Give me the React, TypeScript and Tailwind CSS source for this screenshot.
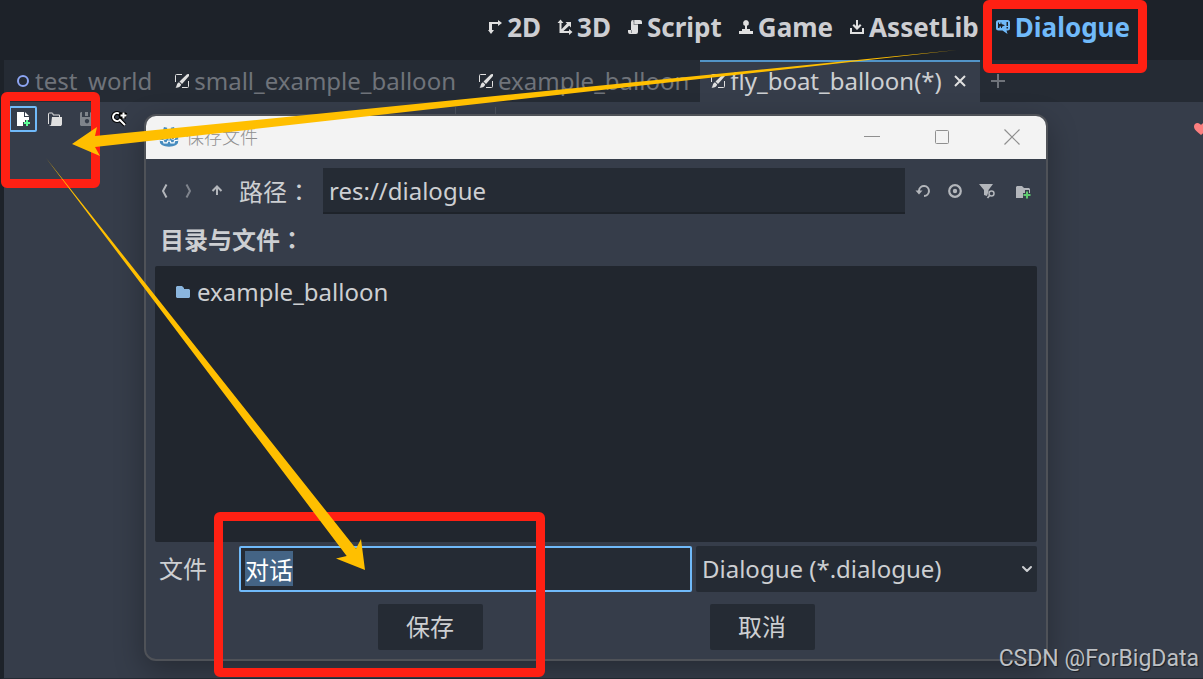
import { useEffect, useRef } from 'react'
import type { ReactNode } from 'react'
import { ChevronDown } from 'lucide-react'

type IconProps = { children: ReactNode; className?: string }

const Icon = ({ children, className = 'text-[#e0e0e0]' }: IconProps) => (
  <svg className={`w-4 h-4 shrink-0 ${className}`} viewBox="0 0 16 16" fill="currentColor" aria-hidden="true">
    {children}
  </svg>
)

const Icon2D = () => (
  <Icon>
    <path d="M2 3h9V1l4 3-4 3V5H5v6h2l-3 4-3-4h1V3z" />
  </Icon>
)

const Icon3D = () => (
  <Icon>
    <path d="M3.500 0.500L6.500 4H4.500v6.200L10 4.600 8.500 3H14v5.500l-1.800-1.700L6.500 12H12v-2l3.500 3-3.500 3v-2H2.500V4H0.500z" />
  </Icon>
)

const IconScript = () => (
  <Icon>
    <path d="M6 1a2 2 0 0 0-2 2v8H1v2a2 2 0 0 0 2 2h6a2 2 0 0 0 2-2V5h4V3a2 2 0 0 0-2-2z" />
    <path fill="#8d9094" d="M6 1h1.500v4H11v1H6.500V3H6zM4 11h1v3H4z" />
  </Icon>
)

const IconGame = () => (
  <Icon>
    <path d="M8 1a3 3 0 0 0-1 5.800V10H4v2H1v3h14v-3h-3v-2H9V6.800A3 3 0 0 0 8 1z" />
  </Icon>
)

const IconAssetLib = () => (
  <Icon>
    <path d="M7 1h2v6l2-2 1.500 1.500L8 11 3.500 6.500 5 5l2 2zM1 9h2v4h10V9h2v6H1z" />
  </Icon>
)

const IconDialogue = () => (
  <Icon className="text-[#70bafa]">
    <path d="M4 1h8.500A2.500 2.500 0 0 1 15 3.500V9a2.500 2.500 0 0 1-2.500 2.500h-1l1 3.500-5-3.500H3.500A2.500 2.500 0 0 1 1 9V3.500A2.500 2.500 0 0 1 3.500 1z" />
    <path
      d="M3 3.500h1v1.500h1.500V3.500h1V5l3.500 1.300-3 1.500V9H6V7.500H4.500V9H3zM11.500 3H13v4h-1.500zM11.500 8H13v1.500h-1.500z"
      fill="#1d2229"
    />
  </Icon>
)

const IconScene = () => (
  <Icon>
    <path d="M13 1.200L15 1v2L8 11 5.500 8.500zM5 9.200L7.200 11.500C6.500 14 4 15 1.500 14.700 3 13.500 2.500 10 5 9.200z" />
    <path fill="none" stroke="currentColor" d="M1.500 9V2.500a1 1 0 0 1 1-1H8M14.500 8v5.500a1 1 0 0 1-1 1H8" />
  </Icon>
)

const views = [
  { name: '2D', icon: <Icon2D /> },
  { name: '3D', icon: <Icon3D /> },
  { name: 'Script', icon: <IconScript /> },
  { name: 'Game', icon: <IconGame /> },
  { name: 'AssetLib', icon: <IconAssetLib /> },
  { name: 'Dialogue', icon: <IconDialogue />, active: true },
]

const MainNav = () => (
  <nav className="flex h-[60px] shrink-0 items-start justify-end gap-4 bg-[#1d2229] pt-[9px] pr-[73px]">
    {views.map((v) => (
      <button
        key={v.name}
        className={`flex items-center gap-1 text-[26px] leading-9 font-bold ${v.active ? 'text-[#70bafa]' : 'text-[#cdced2]'}`}
      >
        {v.icon}
        {v.name}
      </button>
    ))}
  </nav>
)

const SceneTabs = () => (
  <div className="flex h-[42px] shrink-0 bg-[#252b34] text-[24px] leading-8 text-[#6f737a]">
    <button className="flex items-center gap-[3px] px-3">
      <Icon className="text-[#8da5f3]">
        <circle cx="7" cy="8" r="5" fill="none" stroke="currentColor" strokeWidth="2" />
      </Icon>
      test_world
    </button>
    <button className="flex items-center gap-1 pr-3 pl-2.5">
      <IconScene />
      small_example_balloon
    </button>
    <button className="flex items-center gap-1 pr-[11px] pl-2.5">
      <IconScene />
      example_balloon
    </button>
    <div className="flex items-center border-t-2 border-[#5294c8] bg-[#363d4a] pr-3 pb-0.5 pl-2.5 text-[#cdcfd2]">
      <button className="flex items-center gap-1">
        <IconScene />
        fly_boat_balloon(*)
      </button>
      <button className="ml-2.5" aria-label="Close tab">
        <Icon>
          <path d="M3 3l10 10M13 3L3 13" stroke="currentColor" strokeWidth="2" />
        </Icon>
      </button>
    </div>
    <button className="px-2.5" aria-label="New tab">
      <Icon className="text-[#6f737a]">
        <path d="M7 1h2v6h6v2H9v6H7V9H1V7h6z" />
      </Icon>
    </button>
  </div>
)

const Toolbar = () => (
  <div className="flex items-center pt-1 pl-[5px]">
    <button className="rounded-xs border-2 border-[#70bafa] px-1 py-[3px]" aria-label="New">
      <Icon className="text-white">
        <path d="M2 1h7v5h5v3h-4v2H8v4H2zM10 1l4 4h-4z" />
        <path fill="#5fff97" d="M11 9h2v2h2v2h-2v2h-2v-2H9v-2h2z" />
      </Icon>
    </button>
    <button className="ml-2.5" aria-label="Open">
      <Icon>
        <path fill="none" stroke="currentColor" d="M1.500 13V3a1 1 0 0 1 1-1H5a1 1 0 0 1 1 1v1h6.500V6" />
        <path d="M5 6h10v7.500L14 15H2l2-1z" />
      </Icon>
    </button>
    <button className="ml-4" aria-label="Save">
      <Icon className="text-[#7f848c]">
        <path fillRule="evenodd" d="M2 1h1v5h8V1l4 3v10l-1 1H2l-1-1V2zM8 8a2.200 2.200 0 1 0 0.010 0zM6 1h3v4H6z" />
      </Icon>
    </button>
    <button className="ml-4" aria-label="Find">
      <Icon className="text-white">
        <g fill="none" stroke="#000" strokeWidth="4">
          <circle cx="6" cy="6" r="4" />
          <path d="M9 9l5 5M9 4h7M12.500 1v7" />
        </g>
        <g fill="none" stroke="currentColor" strokeWidth="2">
          <path d="M8 2.500A4 4 0 1 0 9.500 8M9 9l5 5M9.500 4.500h6M12.500 1.500v6" />
        </g>
      </Icon>
    </button>
    <div className="ml-[328px] h-6 w-px bg-[#4b515c]" />
    <div className="ml-[39px] h-6 w-px bg-[#4b515c]" />
  </div>
)

const GodotLogo = () => (
  <svg className="h-[22px] w-[22px]" viewBox="0 0 24 24" aria-hidden="true">
    <path
      fill="#478cbf"
      d="M6.500 1l3.500.8V4h4V1.800l3.500-.8 1 3.500 2 1.500 1.500 2v9c0 3.500-4 5.500-10 5.500S2 20.500 2 17V8l1.500-2 2-1.500z"
    />
    <path d="M2 15.500L6 16l.5 2.500H10l.5-2h3l.5 2h3.500L18 16l4-.5" fill="none" stroke="#fff" strokeWidth="1.300" />
    <circle cx="7.500" cy="12.500" r="2.600" fill="#fff" />
    <circle cx="16.500" cy="12.500" r="2.600" fill="#fff" />
    <circle cx="7.800" cy="12.500" r="1.500" fill="#414042" />
    <circle cx="16.200" cy="12.500" r="1.500" fill="#414042" />
    <path d="M11.300 12h1.400v3h-1.400z" fill="#fff" />
  </svg>
)

const TitleBar = () => (
  <header className="flex h-[43px] items-center bg-[#f3f3f3] pr-[26px] pb-0.5 pl-3 text-[#8f8f8f]">
    <GodotLogo />
    <h1 className="ml-1.5 flex-1 text-[18px] leading-6 font-light">保存文件</h1>
    <div className="flex gap-[54px]">
      <button aria-label="Minimize">
        <Icon className="text-[#8f8f8f]">
          <path d="M0 7h16v1H0z" />
        </Icon>
      </button>
      <button aria-label="Maximize">
        <Icon className="text-[#8f8f8f]">
          <rect x="1.500" y="1.500" width="13" height="13" rx="1" fill="none" stroke="currentColor" />
        </Icon>
      </button>
      <button aria-label="Close">
        <Icon className="text-[#8f8f8f]">
          <path d="M0.500 0.500l15 15M15.500 0.500l-15 15" stroke="currentColor" strokeWidth="1.200" />
        </Icon>
      </button>
    </div>
  </header>
)

const Colon = () => <span className="font-['Noto_Sans_CJK_TC',sans-serif]">：</span>

const PathRow = () => (
  <div className="flex items-center">
    <button className="ml-px" aria-label="Back">
      <Icon className="text-[#b3b6bb]">
        <path d="M10.500 1.500L7 8l3.500 6.500" fill="none" stroke="currentColor" strokeWidth="2" />
      </Icon>
    </button>
    <button className="ml-2" aria-label="Forward">
      <Icon className="text-[#7f848d]">
        <path d="M6.500 1.500L10 8l-3.500 6.500" fill="none" stroke="currentColor" strokeWidth="2" />
      </Icon>
    </button>
    <button className="ml-[13px]" aria-label="Up">
      <Icon className="text-[#b3b6bb]">
        <path d="M8 12V4M3.500 8L8 3.500 12.500 8" fill="none" stroke="currentColor" strokeWidth="2" />
      </Icon>
    </button>
    <label htmlFor="path" className="ml-3.5 w-[84px]">
      路径
      <Colon />
    </label>
    <input
      id="path"
      defaultValue="res://dialogue"
      className="h-[46px] min-w-0 flex-1 border-b-2 border-[#1e232a] bg-[#252b34] px-1.5 outline-none"
    />
    <div className="flex items-center pr-1.5 pl-2.5">
      <button aria-label="Refresh">
        <Icon className="text-[#b3b6bb]">
          <path d="M4 9V7.500a5 5 0 1 1 5 5.500" fill="none" stroke="currentColor" strokeWidth="2" />
          <path d="M0.500 7.500h7L4 11.500z" />
        </Icon>
      </button>
      <button className="ml-4" aria-label="Toggle hidden files">
        <Icon className="text-[#b3b6bb]">
          <circle cx="8" cy="8" r="5.800" fill="none" stroke="currentColor" strokeWidth="2.200" />
          <circle cx="8" cy="8" r="2.200" />
        </Icon>
      </button>
      <button className="ml-4" aria-label="Filter">
        <Icon className="text-[#b3b6bb]">
          <path d="M0 1h14L9.500 7v1.500L8 13l-3-1V7z" />
          <circle cx="12.500" cy="10.500" r="2.500" fill="none" stroke="currentColor" strokeWidth="1.500" />
          <path d="M11 12l-2.500 3" stroke="currentColor" strokeWidth="1.800" />
        </Icon>
      </button>
      <button className="ml-5" aria-label="New folder">
        <Icon className="text-[#b3b6bb]">
          <path d="M2 3h5l2 2h5l1 1v9H1V4z" />
          <path fill="#363d4a" d="M10 7h4v3h2v6H8v-6h2z" />
          <path fill="#5fca70" d="M11 8.500h2V11h2.500v2H13v2.500h-2V13H8.500v-2H11z" />
        </Icon>
      </button>
    </div>
  </div>
)

const FileRow = () => {
  const nameRef = useRef<HTMLInputElement>(null)

  useEffect(() => {
    nameRef.current?.focus()
    nameRef.current?.select()
  }, [])

  return (
    <div className="mt-1 flex items-center">
      <label htmlFor="filename" className="w-[84px] pb-0.5 pl-1">
        文件
      </label>
      <input
        id="filename"
        ref={nameRef}
        defaultValue="对话"
        className="h-[46px] min-w-0 flex-[441] rounded-xs border-2 border-[#70bafa] bg-[#252b34] px-1 pb-0.5 text-white outline-none selection:bg-[#446485] selection:text-white"
      />
      <div className="relative ml-1 min-w-0 flex-[341]">
        <select
          aria-label="File type"
          className="h-[46px] w-full appearance-none rounded-xs bg-[#252b34] px-1.5 pb-0.5 outline-none"
        >
          <option>Dialogue (*.dialogue)</option>
        </select>
        <ChevronDown className="pointer-events-none absolute top-[15px] right-0.5 h-4 w-4" strokeWidth={3} />
      </div>
    </div>
  )
}

const SaveDialog = () => (
  <section className="absolute top-[114px] right-[155px] left-[144px] overflow-hidden rounded-xl border-2 border-[#4f5258] bg-[#363d4a] shadow-[0_10px_30px_rgba(0,0,0,0.3)]">
    <TitleBar />
    <div className="px-[9px] py-[9px] text-[24px] leading-[33px] text-[#cdcfd2]">
      <PathRow />
      <h2 className="mt-2 mb-2.5 pl-[5px] font-bold">
        目录与文件
        <Colon />
      </h2>
      <ul className="h-[276px] rounded-xs bg-[#21262e] pt-[9px] pl-5">
        <li className="flex items-center gap-1.5">
          <Icon className="text-[#8ab5de]">
            <path d="M2 2h5l2 2v1h5l1 1v7l-1 1H2l-1-1V3z" />
          </Icon>
          example_balloon
        </li>
      </ul>
      <FileRow />
      <div className="mt-3 flex justify-center gap-[227px]">
        <button className="h-[46px] w-[105px] rounded-xs bg-[#252b34] pb-0.5">保存</button>
        <button className="h-[46px] w-[105px] rounded-xs bg-[#252b34] pb-0.5">取消</button>
      </div>
    </div>
  </section>
)

// Red frames and arrows drawn over the editor
const Annotations = () => (
  <div className="pointer-events-none absolute inset-0">
    <div className="absolute top-0 left-[983px] h-[73px] w-[164px] rounded-md border-9 border-[#ff2013]" />
    <div className="absolute top-[92px] left-px h-24 w-[99px] rounded-md border-9 border-[#ff2013]" />
    <div className="absolute top-[512px] left-[214px] h-[165px] w-[331px] rounded-md border-9 border-[#ff2013]" />
    <svg className="absolute top-0 left-0 h-[679px] w-[1203px]" viewBox="0 0 1203 679" fill="#ffbf00" aria-hidden="true">
      <path d="M72 144L97 127 95 136 957 50 95 147 100 156z" />
      <path d="M365 570L336 558.500 346.700 556 46 158 356 548.700 361 539z" />
    </svg>
  </div>
)

export default function App() {
  return (
    <div className="relative flex min-h-screen flex-col overflow-hidden bg-[#363d4a] font-['Noto_Sans','Noto_Sans_CJK_SC',sans-serif]">
      <MainNav />
      <main className="flex flex-1 flex-col border-b border-l-4 border-b-[#252b34] border-l-[#1d2229]">
        <SceneTabs />
        <Toolbar />
      </main>
      <svg className="absolute top-[121px] -right-1.5 h-4 w-4" viewBox="0 0 16 16" fill="#fc7f7f" aria-hidden="true">
        <path d="M4.500 2C2.500 2 1 3.500 1 5.500 1 9 5 11 8 14c3-3 7-5 7-8.500C15 3.500 13.500 2 11.500 2 10 2 8.700 3 8 4 7.300 3 6 2 4.500 2z" />
      </svg>
      <SaveDialog />
      <Annotations />
      <p className="absolute right-1 bottom-1 font-['Roboto',sans-serif] text-[23px] leading-8 text-[#bdc0c4] [text-shadow:1px_1px_1px_#00000080]">
        CSDN @ForBigData
      </p>
    </div>
  )
}
